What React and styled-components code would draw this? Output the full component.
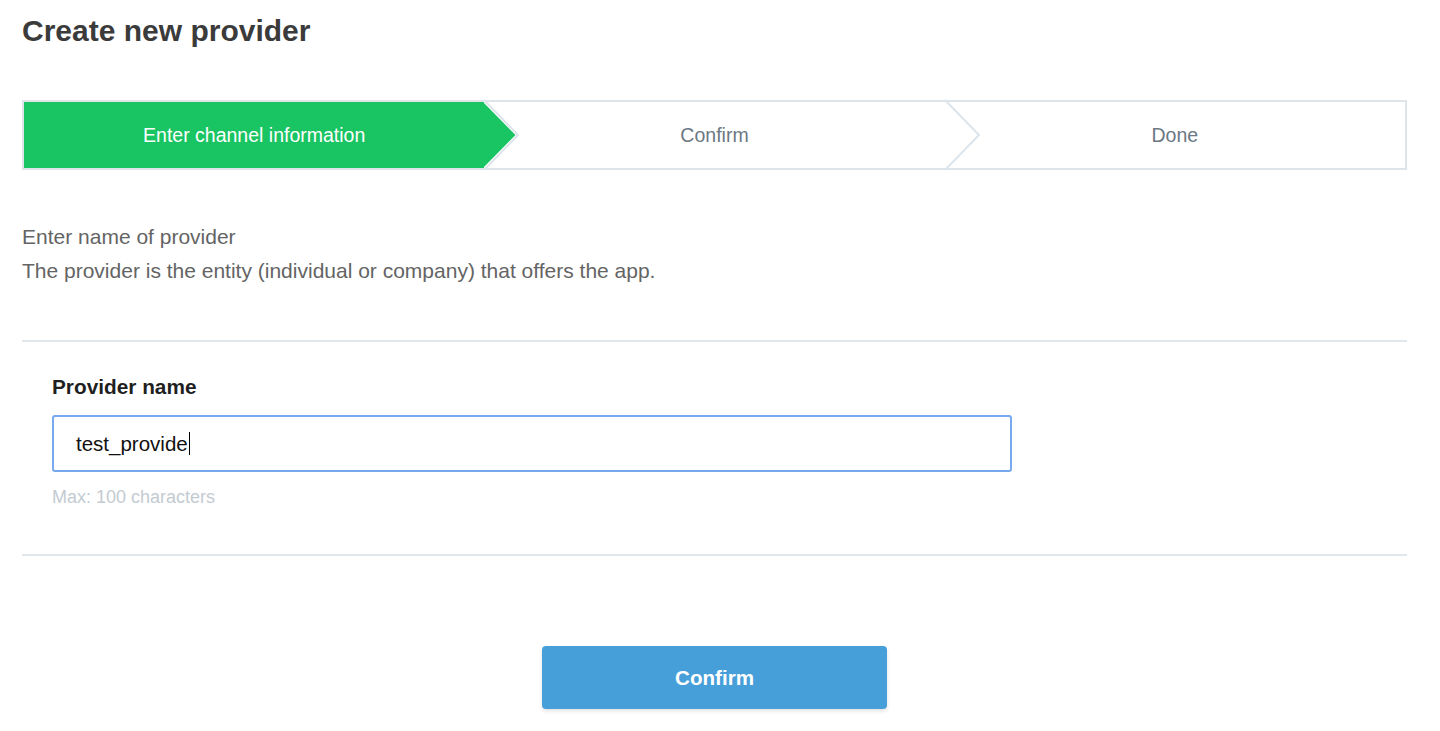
import React from "react";
import styled, { createGlobalStyle } from "styled-components";

const GlobalStyle = createGlobalStyle`
  html, body {
    margin: 0;
    padding: 0;
    background: #ffffff;
    font-family: "Liberation Sans", Arial, sans-serif;
  }
  * { box-sizing: border-box; }
`;

const Page = styled.div`
  padding: 13px 33px 22px 22px;
  width: 1440px;
`;

const Title = styled.h1`
  margin: 0;
  font-size: 30px;
  line-height: 36px;
  font-weight: 700;
  color: #3b3b3b;
`;

const Stepper = styled.div`
  margin-top: 51px;
  height: 70px;
  border: 2px solid #dde5eb;
  display: grid;
  grid-template-columns: repeat(3, 1fr);
`;

const Step = styled.div`
  position: relative;
  display: flex;
  align-items: center;
  justify-content: center;
  font-size: 19.5px;
  color: ${(p) => (p.$active ? "#ffffff" : "#6b7883")};
  background: ${(p) => (p.$active ? "#19c463" : "transparent")};
`;

const Arrow = styled.svg`
  position: absolute;
  left: 100%;
  top: -2px;
  width: 36px;
  height: 70px;
  overflow: visible;
  z-index: 1;
`;

const Description = styled.div`
  margin-top: 50px;
  font-size: 21px;
  line-height: 34px;
  color: #646464;
`;

const FormSection = styled.section`
  margin-top: 52px;
  border-top: 2px solid #dfe6ec;
  border-bottom: 2px solid #dfe6ec;
  padding: 33px 30px 46px;
`;

const Label = styled.div`
  font-size: 20.8px;
  line-height: 24px;
  font-weight: 700;
  color: #1f1f1f;
`;

const InputBox = styled.div`
  margin-top: 16px;
  width: 960px;
  height: 57px;
  border: 2px solid #78a8ee;
  border-radius: 3px;
  padding: 0 22px;
  display: flex;
  align-items: center;
  font-size: 20.5px;
  color: #111;
`;

const Caret = styled.span`
  display: inline-block;
  width: 1px;
  height: 23px;
  background: #000;
  margin-left: 1px;
`;

const Hint = styled.div`
  margin-top: 14px;
  font-size: 18px;
  line-height: 22px;
  color: #c3cbd2;
`;

const Actions = styled.div`
  display: flex;
  justify-content: center;
  margin-top: 90px;
`;

const PrimaryButton = styled.button`
  width: 345px;
  height: 63px;
  border: none;
  border-radius: 4px;
  background: #479fd9;
  color: #fff;
  font-family: "Liberation Sans", Arial, sans-serif;
  font-size: 20.6px;
  font-weight: 700;
  box-shadow: 0 2px 4px rgba(0, 0, 0, 0.12);
  cursor: pointer;
`;

function StepArrow({ active }) {
  return (
    <Arrow viewBox="0 0 36 70" aria-hidden="true">
      <polyline
        points="0,0 34,35 0,70"
        fill={active ? "#ffffff" : "none"}
        stroke="#dde5eb"
        strokeWidth="2"
      />
      {active && <polygon points="-1,2 31.5,35 -1,68" fill="#19c463" />}
    </Arrow>
  );
}

const steps = ["Enter channel information", "Confirm", "Done"];

export default function App() {
  return (
    <Page>
      <GlobalStyle />
      <Title>Create new provider</Title>
      <Stepper>
        {steps.map((s, i) => (
          <Step key={s} $active={i === 0}>
            {s}
            {i < steps.length - 1 && <StepArrow active={i === 0} />}
          </Step>
        ))}
      </Stepper>
      <Description>
        <div>Enter name of provider</div>
        <div>The provider is the entity (individual or company) that offers the app.</div>
      </Description>
      <FormSection>
        <Label>Provider name</Label>
        <InputBox role="textbox">
          test_provide
          <Caret />
        </InputBox>
        <Hint>Max: 100 characters</Hint>
      </FormSection>
      <Actions>
        <PrimaryButton>Confirm</PrimaryButton>
      </Actions>
    </Page>
  );
}
